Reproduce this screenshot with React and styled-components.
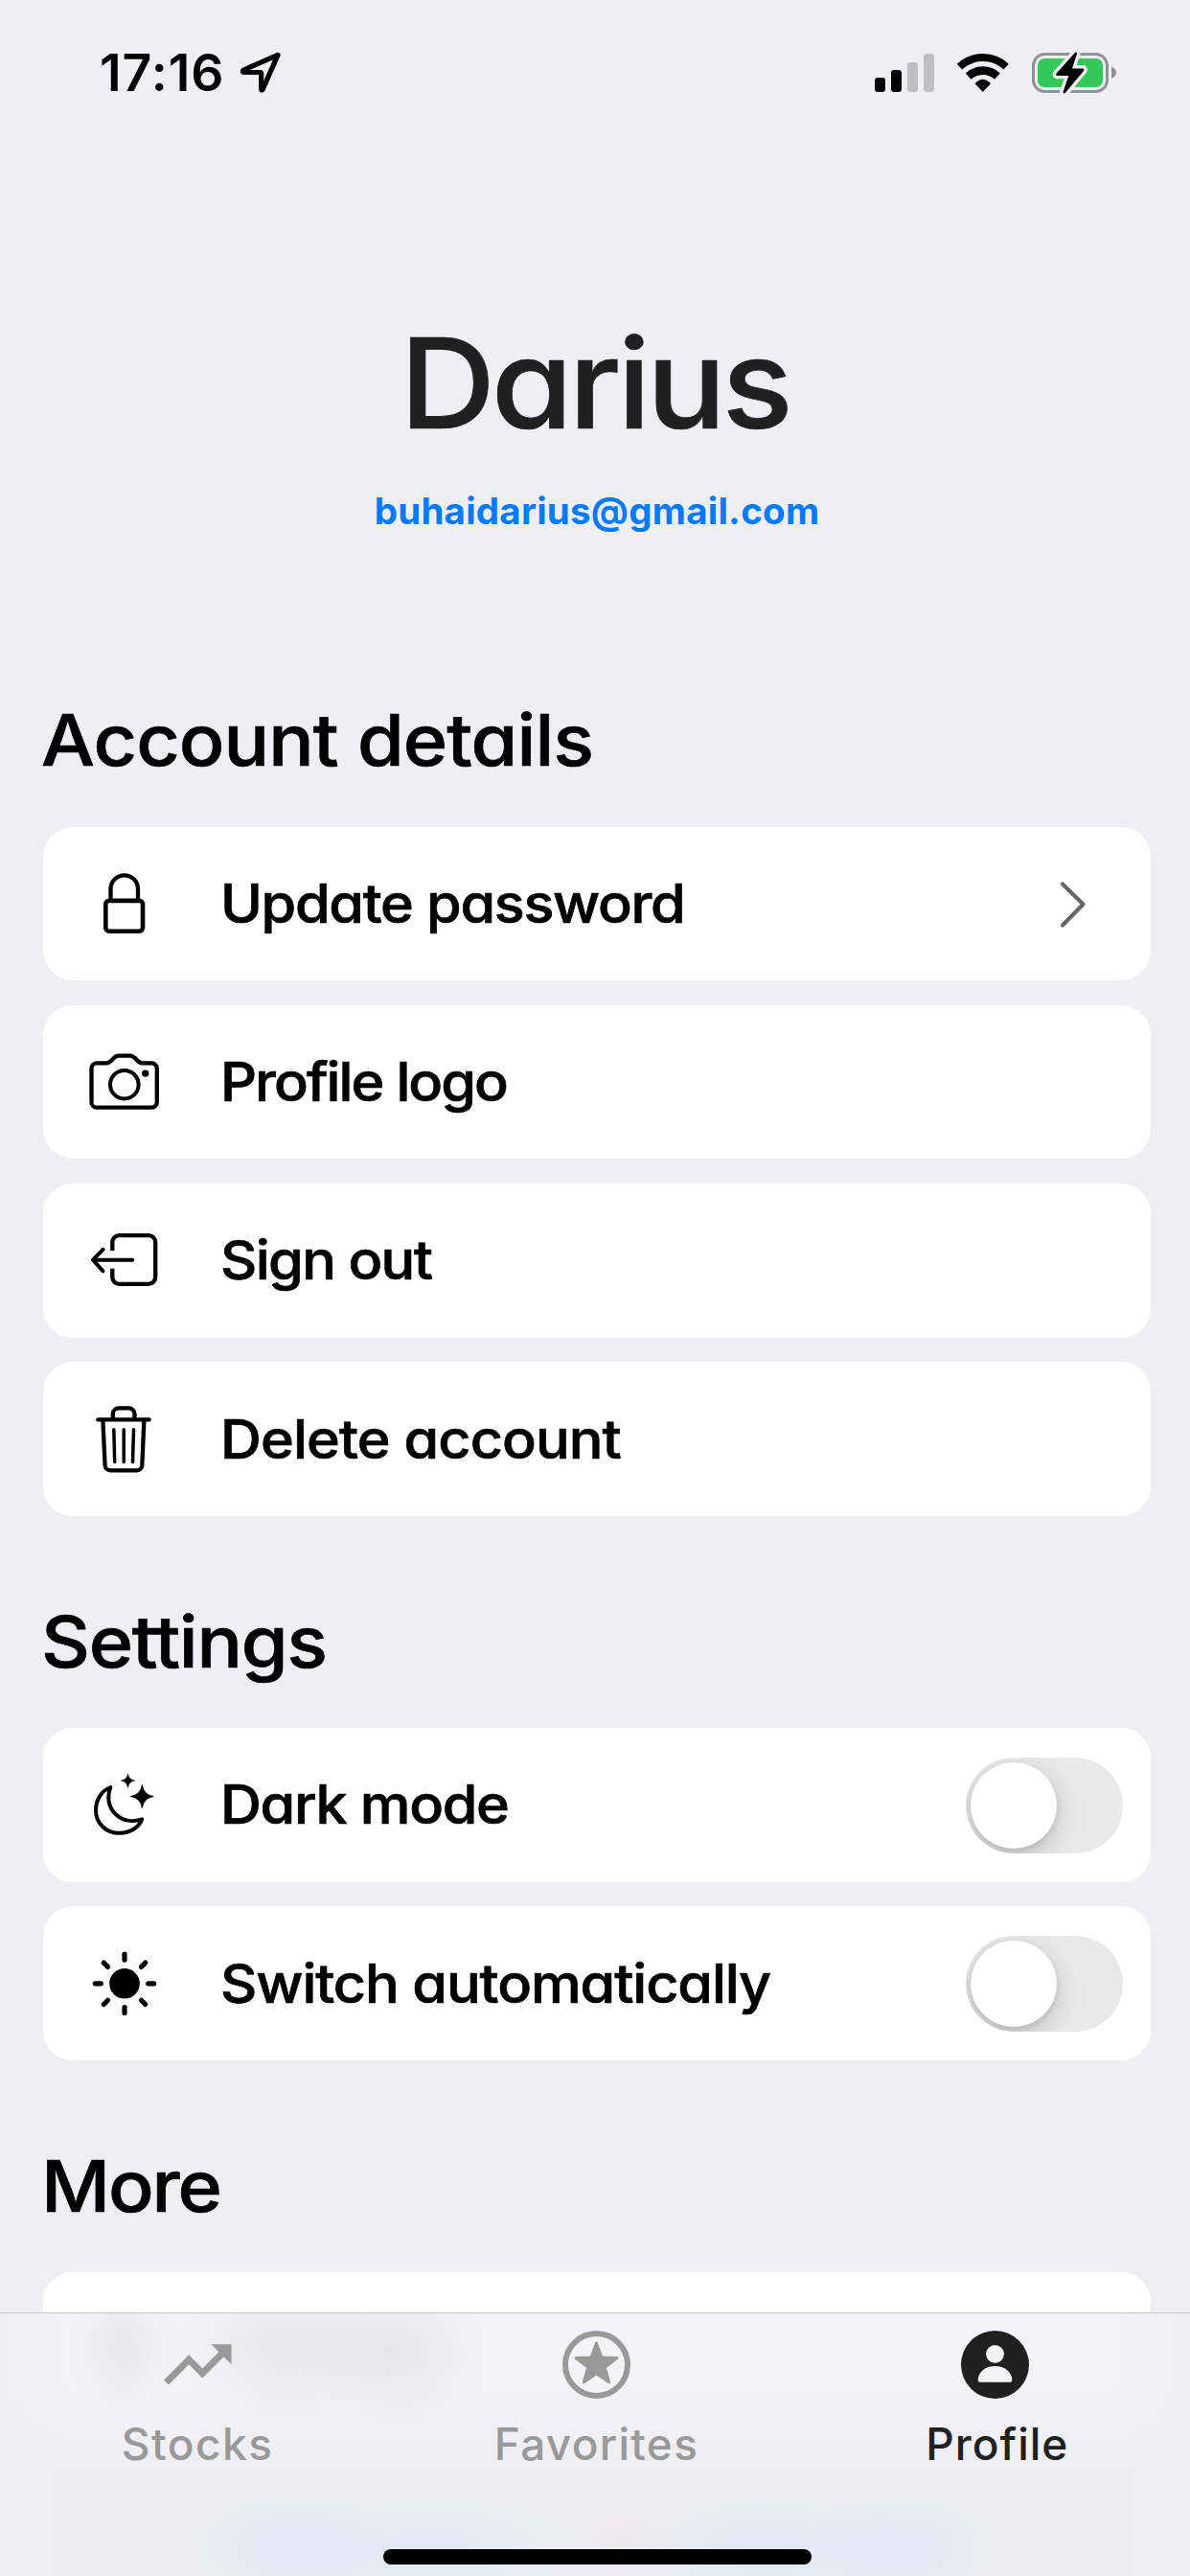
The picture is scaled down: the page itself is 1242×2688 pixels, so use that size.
import React from 'react';
import styled, { createGlobalStyle, css } from 'styled-components';
import { MdTrendingUp } from 'react-icons/md';

const BG = '#efeef3';

const GlobalStyle = createGlobalStyle`
  *, *::before, *::after { box-sizing: border-box; }
  body {
    margin: 0;
    background: ${BG};
    font-family: Inter, Roboto, sans-serif;
    -webkit-font-smoothing: antialiased;
  }
`;

const geometric = css`
  font-weight: 500;
  font-feature-settings: 'cv11' 1;
  -webkit-text-stroke: 0.7px currentColor;
  transform: scaleX(1.06);
  transform-origin: left center;
`;

const Phone = styled.div`
  position: relative;
  width: 1242px;
  height: 2688px;
  overflow: hidden;
  background: ${BG};
  color: #000;
`;

const StatusBar = styled.header`
  display: flex;
  align-items: center;
  justify-content: space-between;
  height: 151px;
  padding: 0 77px 0 104px;
`;

const StatusGroup = styled.div`
  display: flex;
  align-items: center;
  gap: ${(p) => p.$gap}px;
`;

const Clock = styled.time`
  font-size: 53.5px;
  font-weight: 600;
  line-height: 60px;
  letter-spacing: 1px;
`;

const Glyph = styled.svg`
  display: block;
  flex: none;
  width: ${(p) => p.$w}px;
  height: ${(p) => p.$h}px;
  overflow: visible;
`;

const Hero = styled.section`
  display: flex;
  flex-direction: column;
  align-items: center;
  padding-top: 169px;
`;

const Name = styled.h1`
  ${geometric}
  margin: 0;
  font-size: 130px;
  line-height: 160px;
  letter-spacing: -4px;
  color: #202020;
  transform-origin: center;
`;

const Email = styled.a`
  margin-top: 23px;
  padding-left: 4px;
  font-size: 38.5px;
  font-weight: 700;
  line-height: 60px;
  letter-spacing: 0.24px;
  color: #007aff;
`;

const Content = styled.main`
  display: flex;
  flex-direction: column;
  gap: 80.5px;
  padding: 159px 41px 0 45px;
`;

const Section = styled.section`
  display: flex;
  flex-direction: column;
`;

const SectionTitle = styled.h2`
  ${geometric}
  margin: 0 0 40.5px -2px;
  font-size: 74.5px;
  line-height: 100px;
  letter-spacing: ${(p) => p.$tracking}px;
`;

const Rows = styled.div`
  display: flex;
  flex-direction: column;
  gap: 25.6px;
`;

const Row = styled.div`
  display: flex;
  align-items: center;
  height: 160.7px;
  padding-left: 44px;
  border-radius: 31px;
  background: #fff;
`;

const RowLabel = styled.span`
  ${geometric}
  margin: 0 auto 0 60.5px;
  font-size: 56px;
  line-height: 80px;
  white-space: nowrap;
  letter-spacing: ${(p) => p.$tracking}px;
`;

const Chevron = styled(Glyph)`
  margin-right: 61px;
`;

const Toggle = styled.button`
  display: flex;
  align-items: center;
  width: 164px;
  height: 100px;
  margin: 1px 29px 0 0;
  padding: 0 5px;
  border: 0;
  border-radius: 50px;
  background: #e9e9e9;
  overflow: hidden;
`;

const Knob = styled.span`
  width: 90px;
  height: 90px;
  border-radius: 50%;
  background: #fff;
  box-shadow: 0 9px 28px rgba(0, 0, 0, 0.18), 0 3px 6px rgba(0, 0, 0, 0.1);
`;

const TabBar = styled.nav`
  position: absolute;
  left: 0;
  right: 0;
  bottom: 0;
  height: 275px;
  padding-top: 18px;
  border-top: 1px solid #c9c9cd;
  background:
    radial-gradient(ellipse 62px 78px at 128px 36px, rgba(0, 0, 0, 0.055), rgba(0, 0, 0, 0.025) 50%, transparent),
    radial-gradient(ellipse 125px 82px at 300px 36px, rgba(0, 0, 0, 0.055), rgba(0, 0, 0, 0.025) 55%, transparent),
    radial-gradient(ellipse 100px 82px at 418px 40px, rgba(0, 0, 0, 0.055), rgba(0, 0, 0, 0.025) 55%, transparent),
    radial-gradient(ellipse 115px 70px at 296px 244px, rgba(205, 222, 245, 0.36), transparent),
    radial-gradient(ellipse 190px 66px at 450px 244px, rgba(210, 225, 247, 0.36), transparent),
    radial-gradient(ellipse 60px 50px at 652px 242px, rgba(230, 220, 220, 0.25), transparent),
    radial-gradient(ellipse 160px 66px at 800px 244px, rgba(205, 222, 245, 0.36), transparent),
    radial-gradient(ellipse 110px 70px at 950px 244px, rgba(205, 222, 245, 0.36), transparent),
    linear-gradient(to right, ${BG}, rgba(239, 238, 243, 0) 80px, rgba(239, 238, 243, 0) 1150px, ${BG}),
    linear-gradient(#f4f4f6, #f4f4f6 70px, #f1f1f5 110px, #eeedf2 165px, #eeedf2);
`;

const Tabs = styled.div`
  display: grid;
  grid-template-columns: repeat(3, 1fr);
  margin: 0 -5px 0 -2px;
`;

const Tab = styled.a`
  display: flex;
  flex-direction: column;
  align-items: center;
  gap: 17px;
  color: ${(p) => (p.$active ? '#202020' : '#999999')};
`;

const TabIcon = styled.span`
  display: flex;
  align-items: center;
  justify-content: center;
  width: 71px;
  height: 71px;
`;

const TabLabel = styled.span`
  padding-left: ${(p) => p.$inset || 0}px;
  font-size: 46px;
  font-weight: 500;
  line-height: 60px;
  letter-spacing: ${(p) => p.$tracking}px;
`;

const TrendIcon = styled(MdTrendingUp)`
  flex: none;
  width: 84.6px;
  height: 84.6px;
`;

const HomeIndicator = styled.div`
  width: 447px;
  height: 16px;
  margin: 80px auto 0;
  border-radius: 8px;
  background: #000;
  transform: translateX(2px);
`;

const LocationIcon = () => (
  <Glyph $w={42} $h={43} viewBox="251 54 42 43">
    <path d="M290 57.4L254 73.2c-1 .6-.7 2.3.5 2.3h17.2c.6 0 1 .4 1 1V93c0 1.2 1 1.3 1.5.3z" fill="none" stroke="#000" strokeWidth="5.2" strokeLinejoin="round" />
  </Glyph>
);

const SignalIcon = () => (
  <Glyph $w={62} $h={40} viewBox="913 55 62 40">
    <rect x="913" y="80" width="11" height="15" rx="3.2" />
    <rect x="930" y="72" width="11" height="23" rx="3.2" />
    <rect x="947" y="64" width="11" height="31" rx="3.2" fill="#bfbec3" />
    <rect x="964" y="55" width="11" height="40" rx="3.2" fill="#bfbec3" />
  </Glyph>
);

const WifiIcon = () => (
  <Glyph $w={54} $h={40} viewBox="999 55 54 40">
    <g fill="none" stroke="#000">
      <path d="M1001.5 68.6A35.8 35.8 0 0 1 1050.1 68.6" strokeWidth="8" />
      <path d="M1010.7 78.6A22.1 22.1 0 0 1 1040.9 78.6" strokeWidth="8.6" />
    </g>
    <path d="M1025.8 95L1017.6 86.2Q1025.8 77.2 1034 86.2Z" />
  </Glyph>
);

const BatteryIcon = () => {
  const bolt = 'M1122.8 54.8L1103.4 76.6H1117.2L1110.8 95.2L1130.2 71.8H1117.2Z';
  return (
    <Glyph $w={88} $h={42} viewBox="1077 54 88 42">
      <rect x="1078.5" y="55.5" width="77" height="39" rx="12" fill="none" stroke="#919195" strokeWidth="3" />
      <rect x="1083" y="60" width="68" height="30" rx="7" fill="#34c759" />
      <path d="M1160 68.5q5 2 5 6.2t-5 6.2z" fill="#919195" />
      <path d={bolt} fill={BG} stroke={BG} strokeWidth="9.5" strokeLinejoin="round" />
      <path d={bolt} stroke="#000" strokeWidth="2.6" strokeLinejoin="round" />
    </Glyph>
  );
};

const RowIcon = ({ children }) => (
  <Glyph $w={80} $h={80} viewBox="0 0 80 80" fill="none" stroke="#000" strokeWidth="4.3">
    {children}
  </Glyph>
);

const LockIcon = () => (
  <RowIcon>
    <rect x="21.3" y="36.9" width="38.7" height="31.8" rx="3.6" strokeWidth="4.6" />
    <path d="M26.5 37V24.6a14.25 14.25 0 0 1 28.5 0V37" />
  </RowIcon>
);

const CameraIcon = () => (
  <RowIcon>
    <path d="M12 20.4H22c6 0 7-7.7 12.5-7.7H47c5.5 0 7 7.7 12.5 7.7H69.3a5.5 5.5 0 0 1 5.5 5.5V61.2a5.5 5.5 0 0 1-5.5 5.5H12a5.5 5.5 0 0 1-5.5-5.5V25.9a5.5 5.5 0 0 1 5.5-5.5z" />
    <circle cx="40.8" cy="42.7" r="14.8" strokeWidth="4" />
    <circle cx="62.7" cy="31.1" r="3.7" fill="#000" stroke="none" />
  </RowIcon>
);

const SignOutIcon = () => (
  <RowIcon>
    <path d="M28.3 30V21.2a7 7 0 0 1 7-7H66.2a7 7 0 0 1 7 7V57.8a7 7 0 0 1-7 7H35.3a7 7 0 0 1-7-7V48.7" />
    <path d="M49.3 39.7H8.5M18.5 28.8L8 39.7L18.5 51.3" strokeWidth="4" strokeLinecap="round" strokeLinejoin="round" />
  </RowIcon>
);

const TrashIcon = () => (
  <RowIcon>
    <path d="M13.3 19.4H66.7" strokeWidth="4.2" strokeLinecap="round" />
    <path d="M28.8 19.4V13.4a6 6 0 0 1 6-6H45.5a6 6 0 0 1 6 6V19.4" />
    <path d="M18.4 20L20.6 67a5.5 5.5 0 0 0 5.5 5.3H53.8a5.5 5.5 0 0 0 5.5-5.3L61.4 20" />
    <path d="M29.8 29.7L30.7 63.4M40.2 29.7V63.4M50.5 29.7L49.5 63.4" strokeWidth="3.5" strokeLinecap="round" />
  </RowIcon>
);

const Sparkle = ({ x, y, r }) => (
  <path
    d="M0-1Q.14-.14 1 0Q.14.14 0 1Q-.14.14-1 0Q-.14-.14 0-1Z"
    transform={`translate(${x} ${y}) scale(${r})`}
    fill="#000"
    strokeWidth="0.06"
    strokeLinejoin="round"
  />
);

const MoonIcon = () => (
  <RowIcon>
    <path d="M26.3 22C17 25.5 11 35 11 46C11 59.5 21.5 69.8 35.5 69.8C47 69.8 56 64 59.3 55.3C53 57.5 43.5 58 36 53.5C25.5 47 21.5 35 26.3 22Z" strokeWidth="4" strokeLinejoin="round" />
    <Sparkle x={44.5} y={15.1} r={7.3} />
    <Sparkle x={59.3} y={31.5} r={12} />
  </RowIcon>
);

const SunIcon = () => (
  <RowIcon>
    <circle cx="41" cy="39.8" r="15.8" fill="#000" stroke="none" />
    <g transform="translate(41 39.8)" strokeWidth="5.2" strokeLinecap="round">
      {[0, 45, 90, 135, 180, 225, 270, 315].map((a) => (
        <path key={a} d="M24.7 0H30.7" transform={`rotate(${a})`} />
      ))}
    </g>
  </RowIcon>
);

const starPoints = Array.from({ length: 10 }, (_, i) => {
  const r = i % 2 ? 9.2 : 22.5;
  const a = (Math.PI * i) / 5 - Math.PI / 2;
  return `${(r * Math.cos(a)).toFixed(2)},${(r * Math.sin(a)).toFixed(2)}`;
}).join(' ');

const FavoritesIcon = () => (
  <Glyph $w={71} $h={71} viewBox="-35.5 -35.5 71 71">
    <circle r="32.5" fill="none" stroke="currentColor" strokeWidth="6" />
    <polygon points={starPoints} fill="currentColor" stroke="currentColor" strokeWidth="3" strokeLinejoin="round" />
  </Glyph>
);

const ProfileIcon = () => (
  <Glyph $w={71} $h={71} viewBox="-35.5 -35.5 71 71">
    <circle r="35.5" fill="currentColor" />
    <circle cy="-11.2" r="9.4" fill="#f4f4f6" />
    <path d="M-17.8 16.3C-17.8 7.5-9.5 1.6 0 1.6S17.8 7.5 17.8 16.3q0 2-2 2H-15.8q-2 0-2-2z" fill="#f4f4f6" />
  </Glyph>
);

const account = [
  { label: 'Update password', tracking: -1.25, Icon: LockIcon, chevron: true },
  { label: 'Profile logo', tracking: -1.85, Icon: CameraIcon },
  { label: 'Sign out', tracking: -1.55, Icon: SignOutIcon },
  { label: 'Delete account', tracking: -0.85, Icon: TrashIcon },
];

const settings = [
  { label: 'Dark mode', tracking: -1.25, Icon: MoonIcon },
  { label: 'Switch automatically', tracking: -1.02, Icon: SunIcon },
];

const tabs = [
  { label: 'Stocks', tracking: 1.5, Icon: TrendIcon },
  { label: 'Favorites', tracking: 1.3, Icon: FavoritesIcon },
  { label: 'Profile', tracking: 1, inset: 4, Icon: ProfileIcon, active: true },
];

export default function App() {
  return (
    <Phone>
      <GlobalStyle />
      <StatusBar>
        <StatusGroup $gap={16.4}>
          <Clock>17:16</Clock>
          <LocationIcon />
        </StatusGroup>
        <StatusGroup $gap={24}>
          <SignalIcon />
          <WifiIcon />
          <BatteryIcon />
        </StatusGroup>
      </StatusBar>

      <Hero>
        <Name>Darius</Name>
        <Email>buhaidarius@gmail.com</Email>
      </Hero>

      <Content>
        <Section>
          <SectionTitle $tracking={-0.85}>Account details</SectionTitle>
          <Rows>
            {account.map(({ label, tracking, Icon, chevron }) => (
              <Row key={label}>
                <Icon />
                <RowLabel $tracking={tracking}>{label}</RowLabel>
                {chevron && (
                  <Chevron $w={40} $h={60} viewBox="0 0 40 60">
                    <path d="M9 9.5L30.5 30.5L9 52.5" fill="none" stroke="#666" strokeWidth="4.2" strokeLinecap="round" strokeLinejoin="round" />
                  </Chevron>
                )}
              </Row>
            ))}
          </Rows>
        </Section>

        <Section>
          <SectionTitle $tracking={-1.2}>Settings</SectionTitle>
          <Rows>
            {settings.map(({ label, tracking, Icon }) => (
              <Row key={label}>
                <Icon />
                <RowLabel $tracking={tracking}>{label}</RowLabel>
                <Toggle role="switch" aria-checked="false">
                  <Knob />
                </Toggle>
              </Row>
            ))}
          </Rows>
        </Section>

        <Section>
          <SectionTitle $tracking={-2}>More</SectionTitle>
          <Rows>
            <Row />
          </Rows>
        </Section>
      </Content>

      <TabBar>
        <Tabs>
          {tabs.map(({ label, tracking, inset, Icon, active }) => (
            <Tab key={label} $active={active}>
              <TabIcon>
                <Icon />
              </TabIcon>
              <TabLabel $tracking={tracking} $inset={inset}>{label}</TabLabel>
            </Tab>
          ))}
        </Tabs>
        <HomeIndicator />
      </TabBar>
    </Phone>
  );
}
